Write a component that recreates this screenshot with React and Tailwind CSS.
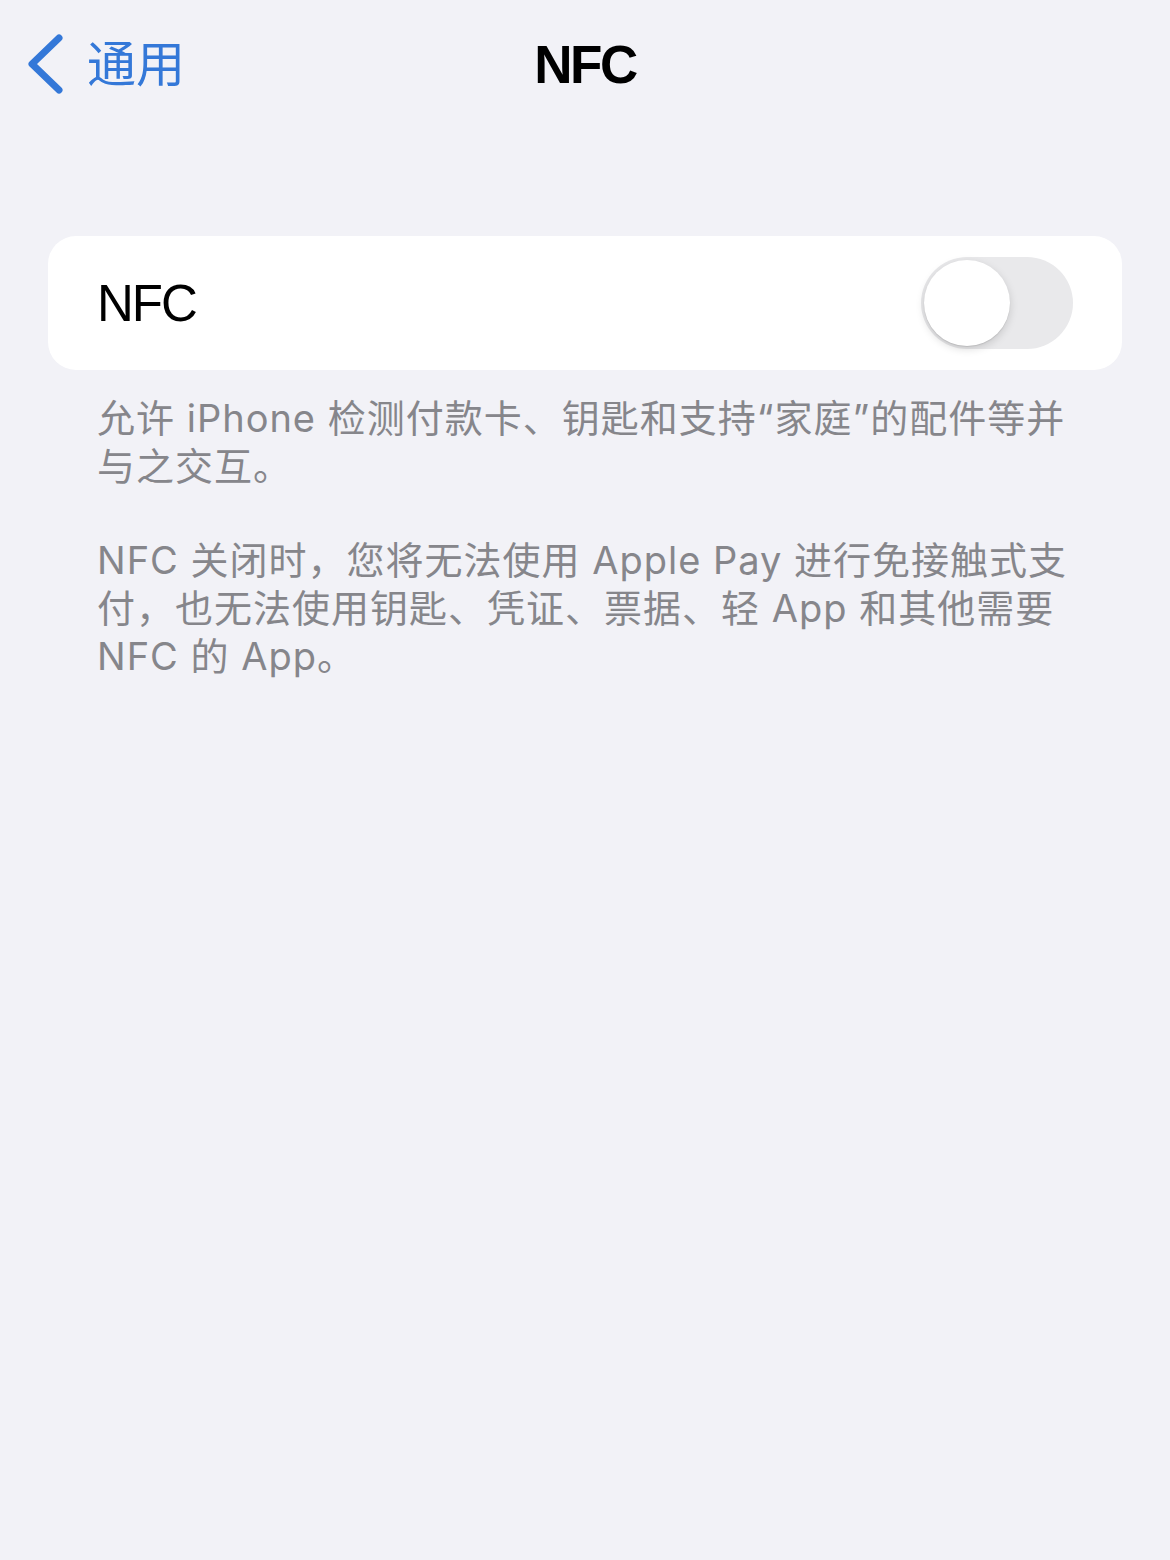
import React from "react";

const cjk = { fontFamily: 'Inter, "Noto Sans CJK SC", sans-serif' };
const latin = { fontFamily: '"Liberation Sans", Arial, sans-serif' };

function Toggle() {
  return (
    <div className="w-[152px] h-[92px] rounded-full bg-[#e9e9eb] p-[3px] flex items-center">
      <div className="w-[86px] h-[86px] rounded-full bg-white shadow-[0_3px_8px_rgba(0,0,0,0.15),0_1px_1px_rgba(0,0,0,0.1)]" />
    </div>
  );
}

export default function App() {
  return (
    <div className="min-h-[1560px] w-[1170px] bg-[#f2f2f7]" style={cjk}>
      {/* Nav bar */}
      <div className="relative h-[128px] flex items-center">
        <div className="flex items-center pl-[27px] gap-[24px] text-[#3478d8]">
          <svg width="36" height="60" viewBox="0 0 36 60" fill="none">
            <path
              d="M32 4 L5 30 L32 56"
              stroke="currentColor"
              strokeWidth="7"
              strokeLinecap="round"
              strokeLinejoin="round"
            />
          </svg>
          <span className="text-[49px] leading-none">通用</span>
        </div>
        <div
          className="absolute left-0 right-0 top-0 h-[128px] flex items-center justify-center text-[53px] font-bold tracking-[-2.5px] text-black leading-none pointer-events-none"
          style={latin}
        >
          NFC
        </div>
      </div>

      {/* Card */}
      <div className="mt-[108px] mx-[48px] h-[134px] bg-white rounded-[28px] flex items-center justify-between pl-[49px] pr-[49px]">
        <span className="text-[51px] tracking-[-2px] text-black leading-none" style={latin}>
          NFC
        </span>
        <Toggle />
      </div>

      {/* Footer */}
      <div className="px-[97px] pt-[24px] text-[38px] tracking-[1px] leading-[48px] text-[#86868b]">
        <p className="whitespace-nowrap">
          允许 iPhone 检测付款卡、钥匙和支持“家庭”的配件等并
          <br />
          与之交互。
        </p>
        <p className="mt-[46px] whitespace-nowrap">
          NFC 关闭时，您将无法使用 Apple Pay 进行免接触式支
          <br />
          付，也无法使用钥匙、凭证、票据、轻 App 和其他需要
          <br />
          NFC 的 App。
        </p>
      </div>
    </div>
  );
}
